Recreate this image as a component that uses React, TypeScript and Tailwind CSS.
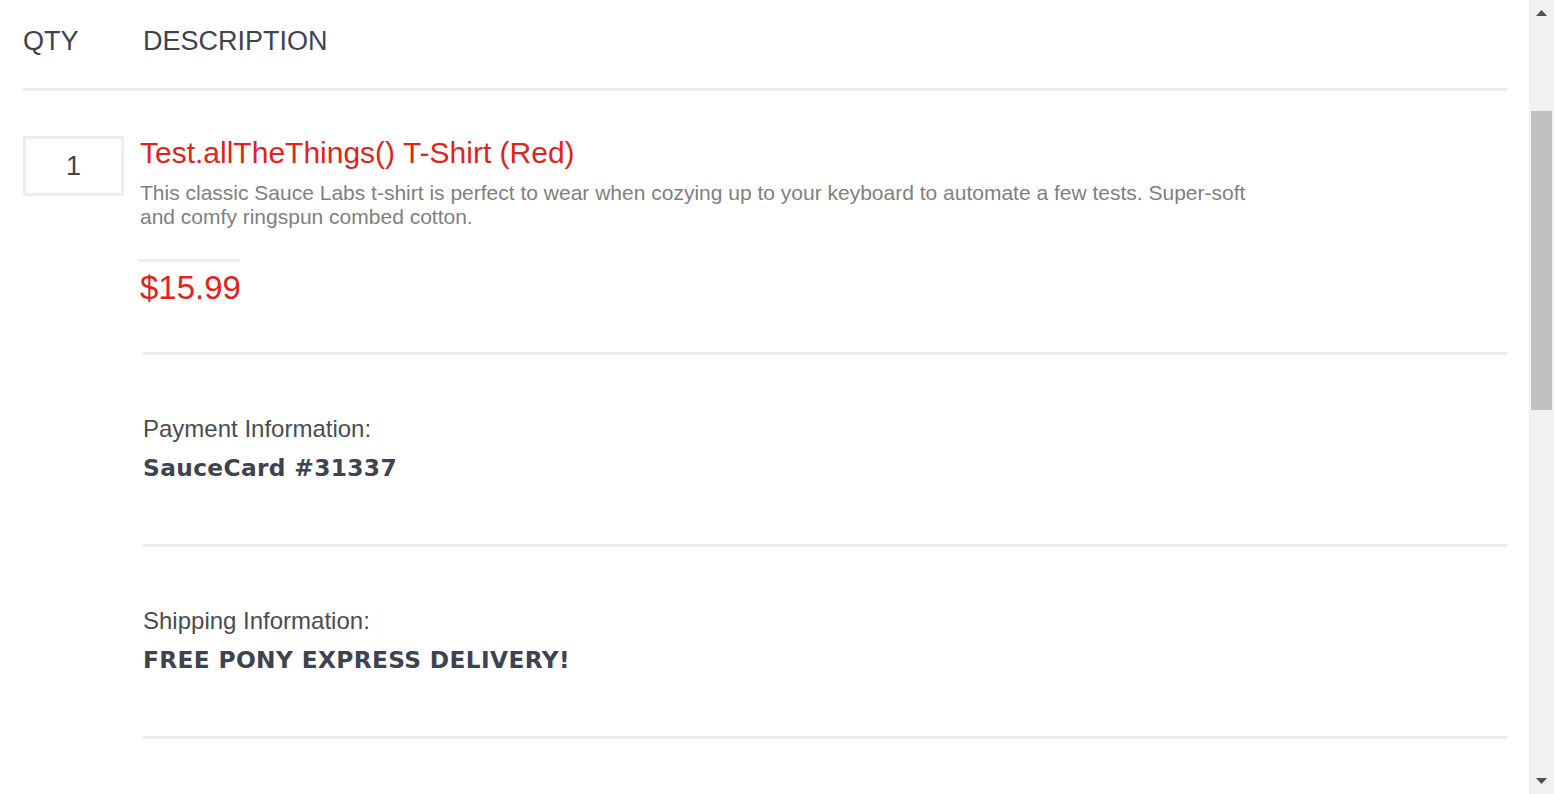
import React from "react"

const sans = "font-['Liberation_Sans',Arial,sans-serif]"

function Divider({ className = "" }: { className?: string }) {
  return <div className={`h-[3px] bg-[#ededed] ${className}`}></div>
}

function InfoBlock({ label, value }: { label: string; value: string }) {
  return (
    <div>
      <div className="pt-[60px] pb-[62px]">
        <div className="text-[24px] leading-[28px] text-[#484c55]">{label}</div>
        <div className="mt-[11px] text-[23.3px] leading-[28px] tracking-[0.35px] font-bold text-[#3d4450] font-['DejaVu_Sans',sans-serif]">
          {value}
        </div>
      </div>
      <Divider />
    </div>
  )
}

function Scrollbar() {
  return (
    <div className="w-[25px] h-full bg-[#f1f1f1] flex flex-col shrink-0">
      <div className="h-[26px] flex items-center justify-center">
        <svg width="11" height="6" viewBox="0 0 11 6">
          <polygon points="5.5,0 11,6 0,6" fill="#505050" />
        </svg>
      </div>
      <div className="flex-1 pt-[85px] px-[2px]">
        <div className="h-[299px] bg-[#c1c1c1]"></div>
      </div>
      <div className="h-[26px] flex items-center justify-center">
        <svg width="11" height="6" viewBox="0 0 11 6">
          <polygon points="0,0 11,0 5.5,6" fill="#505050" />
        </svg>
      </div>
    </div>
  )
}

export default function App() {
  return (
    <div className={`h-screen w-full flex bg-white overflow-hidden ${sans}`}>
      <div className="flex-1 pl-[23px] pr-[22px]">
        {/* header */}
        <div className="pt-[26px] flex text-[27px] leading-[30px] text-[#3d4450]">
          <div className="w-[120px]">QTY</div>
          <div>DESCRIPTION</div>
        </div>
        <Divider className="mt-[32px]" />

        {/* cart item */}
        <div className="mt-[45px] flex items-start">
          <div className="w-[101px] h-[60px] border-[3px] border-[#ededed] flex items-center justify-center text-[27px] text-[#3d4450]">
            1
          </div>
          <div className="ml-[16px]">
            <div className="text-[30px] leading-[34px] text-[#e2231a]">
              Test.allTheThings() T-Shirt (Red)
            </div>
            <div className="mt-[11px] w-[1125px] text-[21px] leading-[24px] text-[#7f7f7f]">
              This classic Sauce Labs t-shirt is perfect to wear when cozying up to your keyboard to automate a few
              tests. Super-soft and comfy ringspun combed cotton.
            </div>
            <Divider className="mt-[30px] w-[101px] -ml-px" />
            <div className="mt-[7px] text-[33px] leading-[38px] text-[#e2231a]">$15.99</div>
          </div>
        </div>

        {/* summary */}
        <div className="mt-[45px] pl-[120px]">
          <Divider />
          <InfoBlock label="Payment Information:" value="SauceCard #31337" />
          <InfoBlock label="Shipping Information:" value="FREE PONY EXPRESS DELIVERY!" />
        </div>
      </div>
      <Scrollbar />
    </div>
  )
}
